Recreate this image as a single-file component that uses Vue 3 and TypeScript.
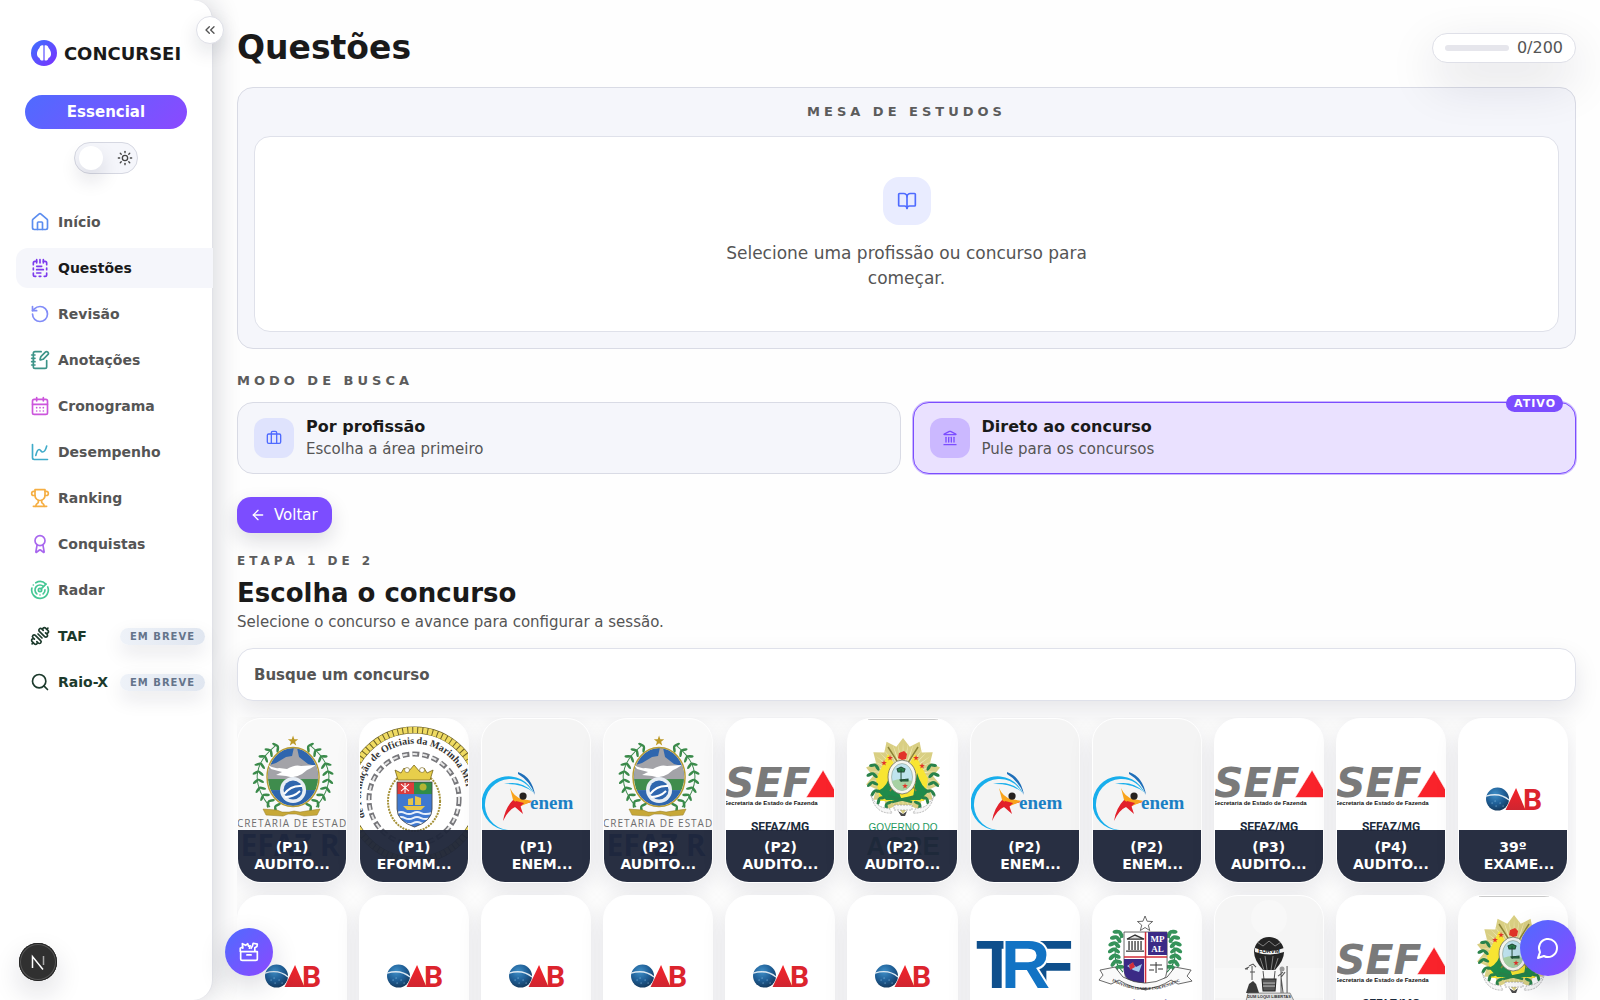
<script setup lang="ts">
import { computed, ref } from 'vue'

interface NavItem {
  label: string
  icon: string
  color: string
  soon?: boolean
}

interface Contest {
  logo: 'rj' | 'navy' | 'enem' | 'sefaz' | 'acre' | 'oab' | 'trf' | 'mpal' | 'balloon'
  title?: [string, string]
  indent?: boolean
}

interface Leaf {
  x: number
  y: number
  angle: number
}

const icons: Record<string, string[]> = {
  home: [
    'M15 21v-8a1 1 0 0 0-1-1h-4a1 1 0 0 0-1 1v8',
    'M3 10a2 2 0 0 1 .709-1.528l7-5.999a2 2 0 0 1 2.582 0l7 5.999A2 2 0 0 1 21 10v9a2 2 0 0 1-2 2H5a2 2 0 0 1-2-2z',
  ],
  notepad: [
    'M8 2v4', 'M12 2v4', 'M16 2v4', 'M16 4h2a2 2 0 0 1 2 2v2', 'M20 12v2',
    'M20 18v2a2 2 0 0 1-2 2h-1', 'M13 22h-2', 'M7 22H6a2 2 0 0 1-2-2v-2', 'M4 14v-2',
    'M4 8V6a2 2 0 0 1 2-2h2', 'M8 10h6', 'M8 14h8', 'M8 18h5',
  ],
  rotate: ['M3 12a9 9 0 1 0 9-9 9.75 9.75 0 0 0-6.74 2.74L3 8', 'M3 3v5h5'],
  notebook: [
    'M13.4 2H6a2 2 0 0 0-2 2v16a2 2 0 0 0 2 2h12a2 2 0 0 0 2-2v-7.4',
    'M2 6h4', 'M2 10h4', 'M2 14h4', 'M2 18h4',
    'M21.378 5.626a1 1 0 1 0-3.004-3.004l-5.01 5.012a2 2 0 0 0-.506.854l-.837 2.87a.5.5 0 0 0 .62.62l2.87-.837a2 2 0 0 0 .854-.506z',
  ],
  calendar: [
    'M8 2v4', 'M16 2v4',
    'M5 4h14a2 2 0 0 1 2 2v14a2 2 0 0 1-2 2H5a2 2 0 0 1-2-2V6a2 2 0 0 1 2-2z',
    'M3 10h18', 'M8 14h.01', 'M12 14h.01', 'M16 14h.01', 'M8 18h.01', 'M12 18h.01', 'M16 18h.01',
  ],
  chart: ['M3 3v16a2 2 0 0 0 2 2h16', 'M7 16c.5-2 1.5-7 4-7 2 0 2 3 4 3 2.5 0 4.5-5 5-7'],
  trophy: [
    'M6 9H4.5a2.5 2.5 0 0 1 0-5H6', 'M18 9h1.5a2.5 2.5 0 0 0 0-5H18', 'M4 22h16',
    'M10 14.66V17c0 .55-.47.98-.97 1.21C7.85 18.75 7 20.24 7 22',
    'M14 14.66V17c0 .55.47.98.97 1.21C16.15 18.75 17 20.24 17 22',
    'M18 2H6v7a6 6 0 0 0 12 0V2Z',
  ],
  award: [
    'm15.477 12.89 1.515 8.526a.5.5 0 0 1-.81.47l-3.58-2.687a1 1 0 0 0-1.197 0l-3.586 2.686a.5.5 0 0 1-.81-.469l1.514-8.526',
    'M18 8a6 6 0 1 1-12 0a6 6 0 1 1 12 0',
  ],
  radar: [
    'M19.07 4.93A10 10 0 0 0 6.99 3.34', 'M4 6h.01', 'M2.29 9.62A10 10 0 1 0 21.31 8.35',
    'M16.24 7.76A6 6 0 1 0 8.23 16.67', 'M12 18h.01', 'M17.99 11.66A6 6 0 0 1 15.77 16.67',
    'M14 12a2 2 0 1 1-4 0a2 2 0 1 1 4 0', 'm13.41 10.59 5.66-5.66',
  ],
  dumbbell: [
    'M14.4 14.4 9.6 9.6',
    'M18.657 2.515a2 2 0 1 0-2.829 2.828l-1.767-1.768a2 2 0 1 0-2.829 2.829l6.364 6.364a2 2 0 1 0 2.829-2.829l-1.768-1.767a2 2 0 1 0 2.828-2.829z',
    'm21.5 2.500-1.400 1.400', 'M3.900 20.100 2.500 21.500',
    'M6.404 11.232a2 2 0 1 0-2.829 2.829l1.768 1.767a2 2 0 1 0-2.828 2.829l2.828 2.828a2 2 0 1 0 2.829-2.828l1.767 1.768a2 2 0 1 0 2.829-2.829z',
  ],
  search: ['m21 21-4.34-4.34', 'M19 11a8 8 0 1 1-16 0a8 8 0 1 1 16 0'],
  collapse: ['m11 17-5-5 5-5', 'm18 17-5-5 5-5'],
  sun: [
    'M16 12a4 4 0 1 1-8 0a4 4 0 1 1 8 0', 'M12 2v2', 'M12 20v2', 'm4.93 4.93 1.41 1.41',
    'm17.66 17.66 1.41 1.41', 'M2 12h2', 'M20 12h2', 'm6.34 17.66-1.41 1.41', 'm19.07 4.93-1.41 1.41',
  ],
  book: [
    'M12 7v14',
    'M3 18a1 1 0 0 1-1-1V4a1 1 0 0 1 1-1h5a4 4 0 0 1 4 4 4 4 0 0 1 4-4h5a1 1 0 0 1 1 1v13a1 1 0 0 1-1 1h-6a3 3 0 0 0-3 3 3 3 0 0 0-3-3z',
  ],
  briefcase: [
    'M16 20V4a2 2 0 0 0-2-2h-4a2 2 0 0 0-2 2v16',
    'M4 6h16a2 2 0 0 1 2 2v10a2 2 0 0 1-2 2H4a2 2 0 0 1-2-2V8a2 2 0 0 1 2-2z',
  ],
  landmark: [
    'M10 18v-7', 'M14 18v-7', 'M18 18v-7', 'M6 18v-7', 'M3 22h18',
    'M11.12 2.198a2 2 0 0 1 1.76.006l7.866 3.847c.476.233.31.949-.22.949H3.474c-.53 0-.695-.716-.22-.949z',
  ],
  back: ['m12 19-7-7 7-7', 'M19 12H5'],
  chat: ['M7.9 20A9 9 0 1 0 4 16.1L2 22Z'],
  toolbox: [
    'M2 11.500h20v8.500a2 2 0 0 1-2 2H4a2 2 0 0 1-2-2z', 'M9.500 15.500h5',
    'M1.500 11V7.500l3-1.500', 'M4.500 7.500L4 2l4 2 2.500-2 1 3 2-.500-1 3',
    'M14.500 7.500l1.500-2.500 1-3.500 5 1-.500 3-2.500 1.500v4',
  ],
}

const navItems: NavItem[] = [
  { label: 'Início', icon: 'home', color: '#5b8def' },
  { label: 'Questões', icon: 'notepad', color: '#7c3aed' },
  { label: 'Revisão', icon: 'rotate', color: '#818cf8' },
  { label: 'Anotações', icon: 'notebook', color: '#3d9488' },
  { label: 'Cronograma', icon: 'calendar', color: '#cc55dc' },
  { label: 'Desempenho', icon: 'chart', color: '#3fabc9' },
  { label: 'Ranking', icon: 'trophy', color: '#f5ae42' },
  { label: 'Conquistas', icon: 'award', color: '#a866ee' },
  { label: 'Radar', icon: 'radar', color: '#45c795' },
  { label: 'TAF', icon: 'dumbbell', color: '#1c3a2c', soon: true },
  { label: 'Raio-X', icon: 'search', color: '#1c3a2c', soon: true },
]

const contests: Contest[] = [
  { logo: 'rj', title: ['(P1)', 'AUDITO...'] },
  { logo: 'navy', title: ['(P1)', 'EFOMM...'] },
  { logo: 'enem', title: ['(P1)', 'ENEM...'], indent: true },
  { logo: 'rj', title: ['(P2)', 'AUDITO...'] },
  { logo: 'sefaz', title: ['(P2)', 'AUDITO...'] },
  { logo: 'acre', title: ['(P2)', 'AUDITO...'] },
  { logo: 'enem', title: ['(P2)', 'ENEM...'], indent: true },
  { logo: 'enem', title: ['(P2)', 'ENEM...'], indent: true },
  { logo: 'sefaz', title: ['(P3)', 'AUDITO...'] },
  { logo: 'sefaz', title: ['(P4)', 'AUDITO...'] },
  { logo: 'oab', title: ['39º', 'EXAME...'], indent: true },
  { logo: 'oab' }, { logo: 'oab' }, { logo: 'oab' }, { logo: 'oab' }, { logo: 'oab' }, { logo: 'oab' },
  { logo: 'trf' }, { logo: 'mpal' }, { logo: 'balloon' }, { logo: 'sefaz' }, { logo: 'acre' },
]

/** Pairs of leaves along both sides of an elliptical wreath. */
function wreath(cx: number, cy: number, rx: number, ry: number, from: number, to: number, count: number): Leaf[] {
  const leaves: Leaf[] = []
  for (let i = 0; i < count; i++) {
    const deg = from + ((to - from) * i) / (count - 1)
    const rad = (deg * Math.PI) / 180
    for (const side of [-1, 1]) {
      for (const tilt of [-1, 1]) {
        const r = tilt * 2.5
        leaves.push({
          x: cx + side * (rx + r) * Math.cos(rad),
          y: cy + (ry + r) * Math.sin(rad),
          angle: side * (deg - 90 + tilt * 35),
        })
      }
    }
  }
  return leaves
}

/** Points of a star polygon with alternating radii. */
function star(cx: number, cy: number, outer: number, inner: number, tips: number): string {
  return Array.from({ length: tips * 2 }, (_, i) => {
    const r = i % 2 ? inner : outer
    const a = (Math.PI * i) / tips - Math.PI / 2
    return `${(cx + r * Math.cos(a)).toFixed(1)},${(cy + r * Math.sin(a)).toFixed(1)}`
  }).join(' ')
}

const rjLeaves = wreath(55, 58, 35, 34, -62, 62, 10)
const mpLeaves = wreath(52, 55, 31, 34, -32, 30, 7)
const acreLeaves = wreath(55, 60, 31, 30, -25, 60, 6)

const active = ref('Questões')
const mode = ref<'area' | 'contest'>('contest')
const query = ref('')
const answered = ref(0)
const progress = computed(() => `${(answered.value / 200) * 100}%`)
</script>

<template>
  <div class="app">
    <aside class="sidebar">
      <button class="collapse" type="button" aria-label="Recolher menu">
        <svg class="icon" viewBox="0 0 24 24"><path v-for="d in icons.collapse" :key="d" :d="d" /></svg>
      </button>

      <a class="brand" href="#">
        <svg class="brand-mark" viewBox="0 0 26 26">
          <defs>
            <linearGradient id="brandFill" x1="0" y1="0" x2="1" y2="1">
              <stop offset="0" stop-color="#3b72ff" />
              <stop offset="1" stop-color="#7c2fff" />
            </linearGradient>
          </defs>
          <circle cx="13" cy="13" r="13" fill="url(#brandFill)" />
          <path d="M12.400 5.500c-2-.800-3.600.600-4 2.500-1.500 1.500-2.700 4-2.400 6.500.200 2 1.200 3 2.500 3.500.600 2.400 2.500 3 3.900 2.200z" fill="#fff" />
          <path d="M13.600 5.500c2-.800 3.600.600 4 2.500 1.500 1.500 2.700 4 2.400 6.500-.200 2-1.200 3-2.500 3.500-.600 2.400-2.500 3-3.900 2.200z" fill="#fff" />
        </svg>
        <span>CONCURSEI</span>
      </a>

      <button class="plan" type="button">Essencial</button>
      <button class="theme" type="button" aria-label="Alternar tema">
        <span class="knob"></span>
        <svg class="icon" viewBox="0 0 24 24"><path v-for="d in icons.sun" :key="d" :d="d" /></svg>
      </button>

      <nav class="nav">
        <a
          v-for="item in navItems"
          :key="item.label"
          href="#"
          class="nav-item"
          :class="{ active: item.label === active, soon: item.soon }"
          @click.prevent="active = item.label"
        >
          <svg class="icon" viewBox="0 0 24 24" :style="{ color: item.color }">
            <path v-for="d in icons[item.icon]" :key="d" :d="d" />
          </svg>
          <span>{{ item.label }}</span>
          <span v-if="item.soon" class="soon-badge">EM BREVE</span>
        </a>
      </nav>
    </aside>

    <main class="content">
      <header class="top">
        <h1>Questões</h1>
        <div class="counter">
          <span class="track"><span class="fill" :style="{ width: progress }"></span></span>
          <span>{{ answered }}/200</span>
        </div>
      </header>

      <section class="desk">
        <h2 class="eyebrow">MESA DE ESTUDOS</h2>
        <div class="desk-empty">
          <span class="desk-icon">
            <svg class="icon" viewBox="0 0 24 24"><path v-for="d in icons.book" :key="d" :d="d" /></svg>
          </span>
          <p>Selecione uma profissão ou concurso para começar.</p>
        </div>
      </section>

      <section class="modes">
        <h2 class="eyebrow">MODO DE BUSCA</h2>
        <div class="mode-row">
          <button type="button" class="mode" :class="{ on: mode === 'area' }" @click="mode = 'area'">
            <span class="mode-icon">
              <svg class="icon" viewBox="0 0 24 24"><path v-for="d in icons.briefcase" :key="d" :d="d" /></svg>
            </span>
            <span class="mode-text"><strong>Por profissão</strong><span>Escolha a área primeiro</span></span>
            <span v-if="mode === 'area'" class="mode-badge">ATIVO</span>
          </button>
          <button type="button" class="mode" :class="{ on: mode === 'contest' }" @click="mode = 'contest'">
            <span class="mode-icon">
              <svg class="icon" viewBox="0 0 24 24"><path v-for="d in icons.landmark" :key="d" :d="d" /></svg>
            </span>
            <span class="mode-text"><strong>Direto ao concurso</strong><span>Pule para os concursos</span></span>
            <span v-if="mode === 'contest'" class="mode-badge">ATIVO</span>
          </button>
        </div>
      </section>

      <button class="back" type="button">
        <svg class="icon" viewBox="0 0 24 24"><path v-for="d in icons.back" :key="d" :d="d" /></svg>
        Voltar
      </button>

      <section class="step">
        <p class="eyebrow small">ETAPA 1 DE 2</p>
        <h2 class="step-title">Escolha o concurso</h2>
        <p class="step-sub">Selecione o concurso e avance para configurar a sessão.</p>
      </section>

      <input v-model="query" class="search" type="text" placeholder="Busque um concurso" aria-label="Busque um concurso" />

      <div class="grid">
        <button v-for="(contest, index) in contests" :key="index" type="button" class="tile">
          <svg class="art" viewBox="0 0 108 163" preserveAspectRatio="xMidYMid slice">
            <g v-if="contest.logo === 'rj'">
              <rect width="108" height="163" fill="#f9f9f9" />
              <path d="M37 27Q4 54 32 88M73 27Q106 54 78 88" fill="none" stroke="#3f8a50" />
              <ellipse
                v-for="(leaf, i) in rjLeaves" :key="i" rx="1.300" ry="3.600" fill="#3a8a4a"
                :transform="`translate(${leaf.x} ${leaf.y}) rotate(${leaf.angle})`"
              />
              <polygon :points="star(55, 22, 5.500, 2.200, 5)" fill="#bd9a28" />
              <clipPath :id="`rj${index}`"><ellipse cx="55" cy="58" rx="25" ry="29" /></clipPath>
              <g :clip-path="`url(#rj${index})`">
                <rect x="28" y="28" width="54" height="32" fill="#2f66ae" />
                <path d="M28 62V47l10-3 10-6 6-1 2-9 3 1 2 9 9 7 12 3v16z" fill="#a3a3a8" />
                <rect x="28" y="60" width="54" height="11" fill="#3f8c4d" />
                <rect x="28" y="71" width="54" height="18" fill="#2f66ae" />
              </g>
              <ellipse cx="55" cy="58" rx="26" ry="29.500" fill="none" stroke="#b79c35" stroke-width="1.500" />
              <path d="M30 46q6 4 11 3l8 1q8-5 14-3l15-1q-6 4-9 5l-5 4q-8 5-16 2l-10-1 6-3-11-3z" fill="#fff" />
              <circle cx="55" cy="71" r="13" fill="#e8eef5" />
              <circle cx="55" cy="71" r="9.500" fill="#2f66ae" />
              <path d="M46 75q7-9 18-8M47 78q9 0 15-6" fill="none" stroke="#fff" stroke-width="2" />
              <path d="M25 90l14 1 5 2h7l5-1 6 1 6-1 14-2-3 6-13 1-8-2h-8l-5 2-17-1z" fill="#c7a838" stroke="#947b22" stroke-width=".5" />
              <text x="54" y="108" class="rj-caption">CRETARIA DE ESTAD</text>
              <text x="52" y="137" class="rj-title">EFAZ R</text>
            </g>

            <g v-else-if="contest.logo === 'navy'">
              <rect width="108" height="163" fill="#fff" />
              <circle cx="54" cy="76" r="65" fill="none" stroke="#6e6228" stroke-width="7" />
              <circle cx="54" cy="76" r="65" fill="none" stroke="#efdb62" stroke-width="6" stroke-dasharray="4 1" />
              <path :id="`navy${index}`" d="M5 98a53 53 0 1 1 98 0" fill="none" />
              <text class="navy-text"><textPath :href="`#navy${index}`">de Formação de Oficiais da Marinha Mer</textPath></text>
              <circle cx="54" cy="80" r="45" fill="none" stroke="#77777b" stroke-width="5" stroke-dasharray="7 3" />
              <circle cx="54" cy="80" r="45" fill="none" stroke="#e6e6e6" stroke-width="2" stroke-dasharray="5 5" />
              <ellipse cx="54" cy="82" rx="26" ry="30" fill="none" stroke="#a59138" stroke-width="2" stroke-dasharray="2 1" />
              <path d="M38 61l-3-10 6 3 3-5 4 4 6-7 6 7 4-4 3 5 6-3-3 10z" fill="#e7ce4b" stroke="#756319" stroke-width=".8" />
              <circle cx="47" cy="51" r="2.500" fill="#fff" stroke="#756319" stroke-width=".6" />
              <circle cx="62" cy="51" r="2.500" fill="#fff" stroke="#756319" stroke-width=".6" />
              <clipPath :id="`shield${index}`"><path d="M37 63h35v27q0 12-17.500 18Q37 102 37 90z" /></clipPath>
              <g :clip-path="`url(#shield${index})`">
                <rect x="37" y="62" width="35" height="48" fill="#3f78d0" />
                <rect x="37" y="62" width="17" height="13" fill="#dc3b3b" />
                <rect x="54" y="62" width="18" height="13" fill="#2f8d48" />
                <path d="M41 65l8 7M49 65l-8 7M45 64v10" stroke="#fff" />
                <circle cx="63" cy="68" r="3.500" fill="#b3b532" />
                <path d="M43 87h22l-4 4H47zM48 86v-6l5-1v7zM55 86v-9l6 2v7z" fill="#e8c64a" />
                <path d="M37 94q4-2 8 0t8 0 8 0 11 0M37 99q4-2 8 0t8 0 8 0 11 0M37 104q4-2 8 0t8 0 8 0 11 0" stroke="#e8f0fb" stroke-width="2" fill="none" />
              </g>
              <path d="M37 63h35v27q0 12-17.500 18Q37 102 37 90z" fill="none" stroke="#444" stroke-width=".8" />
            </g>

            <g v-else-if="contest.logo === 'enem'">
              <rect width="108" height="163" fill="#f4f4f4" />
              <path d="M30 111A27 27 0 1 1 52 75Q43 59 27 60A24.500 24.500 0 1 0 30 111z" fill="#18aeec" />
              <path d="M22 65q17-4 29 8-12-9-29-8z" fill="#18aeec" />
              <path d="M36 53q14 5 17 23Q48 62 36 55z" fill="#1f6fb9" />
              <path d="M31 81q-8 8-10 21 5-11 12-14l8 7-3-9 12-3-10-2z" fill="#e2202b" />
              <path d="M28 69q4 9 12 11l11 2-12 5-8-6z" fill="#f9a31c" />
              <path d="M34 82l8 2-5 5-7-2z" fill="#e2202b" />
              <circle cx="41" cy="77" r="3.600" fill="#26211f" />
              <text x="48" y="90" class="enem-text">enem</text>
            </g>

            <g v-else-if="contest.logo === 'sefaz'">
              <rect width="108" height="163" fill="#fff" />
              <text x="-1" y="78" class="sef-text">SEF</text>
              <polygon points="97,51 113,78.500 80,78.500" fill="#f9232b" stroke="#fff" stroke-width=".6" />
              <text x="-2" y="86" class="sef-caption">Secretaria de Estado de Fazenda</text>
              <text x="54" y="112" class="sef-name">SEFAZ/MG</text>
            </g>

            <g v-else-if="contest.logo === 'acre'">
              <rect width="108" height="163" fill="#fff" />
              <path d="M20 .5h70" stroke="#c9c9c9" />
              <polygon :points="star(55, 57, 38, 30, 14)" fill="#d9cf83" />
              <polygon :points="star(55, 57, 34, 12, 40)" fill="#efe9b5" />
              <path d="M32 82L28 60l12-25 14 22 13-22 13 25-4 22z" fill="#f8e532" />
              <path d="M30 72q10-4 13-20l10 27 12-1 4-24q4 14 12 18l-9 9H38z" fill="#1f8b4b" />
              <path d="M40 28l28 44M70 28L42 72" stroke="#8c8436" stroke-width="1.500" />
              <ellipse
                v-for="(leaf, i) in acreLeaves" :key="i" rx="1.600" ry="3.600" fill="#28824a"
                :transform="`translate(${leaf.x} ${leaf.y}) rotate(${leaf.angle})`"
              />
              <polygon :points="star(36, 44, 3, 1.200, 5)" fill="#e23429" />
              <polygon :points="star(42, 39, 3, 1.200, 5)" fill="#e23429" />
              <polygon :points="star(68, 39, 3, 1.200, 5)" fill="#e23429" />
              <polygon :points="star(74, 47, 3, 1.200, 5)" fill="#e23429" />
              <ellipse cx="54" cy="58" rx="14" ry="17" fill="#f6f6ef" stroke="#6b6b5c" stroke-width=".8" />
              <ellipse cx="54" cy="58" rx="10.500" ry="13.500" fill="#bfe3ee" stroke="#7d8c7c" stroke-width=".5" />
              <path d="M44 62q10-4 20 0-2 9-10 9.500-8-.5-10-9.500z" fill="#a7d2a3" />
              <path d="M53 50v13M49 50l4-2 4 2-1 3h-6zM52 61l8-1v2h-7z" stroke="#234d37" fill="#28824a" />
              <polygon :points="star(57, 67, 3, 1.200, 5)" fill="#e23429" />
              <path d="M50 39l1-5 5-2 3 3-1 5-4 1z" fill="#e23429" />
              <path d="M40 77l24 6M68 77l-24 6" stroke="#28824a" stroke-width="2.500" />
              <path d="M23 76q6 14 18 13l3 5q-17 1-21-18zM86 76q-6 14-18 13l-3 5q17 1 21-18zM46 86h18v5H46z" fill="#f7f7f7" stroke="#8b8b8b" stroke-width=".6" stroke-dasharray="2 1" />
              <path d="M50 92l5 3 4-3-2 5h-4z" fill="#4b4b4b" />
              <text x="55" y="112" class="acre-gov">GOVERNO DO</text>
              <text x="55" y="136" class="acre-name">ACRE</text>
            </g>

            <g v-else-if="contest.logo === 'oab'">
              <rect width="108" height="163" fill="#fff" />
              <radialGradient :id="`globe${index}`" cx=".4" cy=".3" r=".8">
                <stop offset="0" stop-color="#3f8fc7" />
                <stop offset=".5" stop-color="#1f5f97" />
                <stop offset="1" stop-color="#12304f" />
              </radialGradient>
              <linearGradient :id="`red${index}`" x1="0" y1="0" x2="0" y2="1">
                <stop offset="0" stop-color="#f5232a" />
                <stop offset="1" stop-color="#cf2530" />
              </linearGradient>
              <circle cx="38.500" cy="80" r="11.500" :fill="`url(#globe${index})`" />
              <path d="M27 77q14-4 23 4" fill="none" stroke="#dbe8f2" stroke-width="1.300" />
              <path d="M33 84h.1M37 87h.1M41 84h.1M36 82h.1M44 87h.1" stroke="#9fd0f0" stroke-linecap="round" />
              <polygon points="57,69 66.500,91 46.500,91" :fill="`url(#red${index})`" />
              <text x="64" y="91" class="oab-text">B</text>
            </g>

            <g v-else-if="contest.logo === 'trf'">
              <rect width="108" height="163" fill="#fff" />
              <text x="5" y="92" class="trf-text dark">T</text>
              <text x="61" y="92" class="trf-text dark">F</text>
              <text x="30" y="92" class="trf-text bright">R</text>
            </g>

            <g v-else-if="contest.logo === 'mpal'">
              <rect width="108" height="163" fill="#fff" />
              <path d="M30 38Q14 60 30 76M74 38Q90 60 74 76" fill="none" stroke="#27804a" />
              <ellipse
                v-for="(leaf, i) in mpLeaves" :key="i" rx="2" ry="4" fill="#35935a"
                :transform="`translate(${leaf.x} ${leaf.y}) rotate(${leaf.angle})`"
              />
              <polygon :points="star(52, 28, 8, 3.500, 5)" fill="#fff" stroke="#444" stroke-width=".8" />
              <path d="M31 36h43v38q0 14-21.500 20Q31 88 31 74z" fill="#fff" stroke="#444" stroke-width=".8" />
              <path d="M55 36h19v23H55zM31 63h20v29q-20-6-20-18z" fill="#3b2a86" />
              <path d="M52.500 36v56M31 61h43" stroke="#d22f3a" stroke-width="1.500" />
              <path d="M34 43l8-4 9 4zM33 55h18M36 45v9M39 45v9M42 45v9M45 45v9M48 45v9" stroke="#333" stroke-width="1.300" fill="#ddd" />
              <text x="64.500" y="46" class="mp-text">MP</text>
              <text x="64.500" y="56" class="mp-text">AL</text>
              <path d="M34 70l5-3 4 4 6-3-3 8-6-2z" fill="#9fc6ec" />
              <path d="M36 69l4-3 2 5-5 3z" fill="#d22f3a" />
              <path d="M63 66v11M57 69h12M56 74h5M65 73h5" stroke="#333" fill="none" />
              <path d="M7 74l15-3 8 10q22 12 44 0l8-10 16 3-4 6 5 5-14 3-7-4q-26 17-52 0l-8 4-12-4 4-5z" fill="#fafafa" stroke="#444" stroke-width=".8" />
              <path :id="`mp${index}`" d="M19 85q33 18 68 0" fill="none" />
              <text class="mp-ribbon"><textPath :href="`#mp${index}`">INDIVISIBILIDADE E INDEPENDÊNCIA</textPath></text>
              <text x="54" y="111" class="mp-caption">MINISTÉRIO PÚBLICO</text>
            </g>

            <g v-else>
              <rect width="108" height="163" fill="#f5f5f5" />
              <path d="M0 72h108v30H0z" fill="#f8f8f8" />
              <circle cx="54" cy="22" r="18" fill="#f8f8f8" />
              <path d="M39 56a15 15 0 0 1 30 0q0 8-9 18H48q-9-10-9-18z" fill="#242424" />
              <path d="M45 62l4 12M50 60l2 14M58 60l-2 14M63 62l-4 12M42 46l6 4 6-5 6 5 6-4" stroke="#9b9b9b" fill="none" stroke-width=".8" />
              <path d="M40 52q14 6 29 0v4q-14 5-29 0z" fill="#f3f3f3" />
              <text x="54" y="57" class="balloon-text">FORVM</text>
              <path d="M48 75l1 9M60 75l-1 9" stroke="#555" />
              <path d="M47 83h14l-1 12H48z" fill="#555" stroke="#222" />
              <path d="M48 87h12M48 90h12" stroke="#ddd" stroke-width=".8" />
              <path d="M34 70l4-2 3 3M37 70v14M33 73h-3l4-2M35 76h5M66 74v23M72 70v27M70 76l-4 5 2 16M63 80l5-4" stroke="#555" fill="none" />
              <circle cx="67" cy="73" r="2.500" fill="#999" />
              <path d="M31 97l3-9 4-3 3 3 3 9z" fill="#3a3a3a" />
              <path d="M33 97h42l4 8H31z" fill="#e2e2e2" stroke="#666" stroke-width=".7" />
              <text x="54" y="102" class="balloon-caption">DUM LOQUI LIBERTAS</text>
            </g>
          </svg>
          <span v-if="contest.title" class="tile-label">
            <span>{{ contest.title[0] }}</span>
            <span :class="{ indent: contest.indent }">{{ contest.title[1] }}</span>
          </span>
        </button>
      </div>
    </main>

    <button class="fab tools" type="button" aria-label="Ferramentas">
      <svg class="icon" viewBox="0 0 24 24"><path v-for="d in icons.toolbox" :key="d" :d="d" /></svg>
    </button>
    <button class="fab chat" type="button" aria-label="Abrir conversa">
      <svg class="icon" viewBox="0 0 24 24"><path v-for="d in icons.chat" :key="d" :d="d" /></svg>
    </button>
    <button class="dev" type="button" aria-label="Ferramentas de desenvolvimento">
      <svg viewBox="0 0 38 38">
        <path d="M13.500 25V13.500L24 26.500" fill="none" stroke="#fff" stroke-width="1.500" />
        <path d="M24.500 13v9" fill="none" stroke="#aaa" stroke-width="1.500" />
      </svg>
    </button>
  </div>
</template>

<style>
body {
  margin: 0;
  background: #fefefe;
}
</style>

<style scoped>
.app {
  display: flex;
  height: 100vh;
  overflow: hidden;
  font-family: 'DejaVu Sans', Verdana, sans-serif;
  color: #1a1a1a;
}

.app *,
.app {
  box-sizing: border-box;
}

button {
  font-family: inherit;
  cursor: pointer;
}

h1,
h2,
p {
  margin: 0;
}

.icon {
  display: block;
  flex: none;
  width: 20px;
  height: 20px;
  fill: none;
  stroke: currentColor;
  stroke-width: 2;
  stroke-linecap: round;
  stroke-linejoin: round;
}

/* Sidebar */
.sidebar {
  position: relative;
  z-index: 2;
  display: flex;
  flex: none;
  flex-direction: column;
  align-items: center;
  width: 213px;
  padding: 39px 0 0;
  background: #fff;
  border-right: 1px solid #e1e2e8;
  border-radius: 0 20px 20px 0;
  box-shadow: 4px 0 24px rgba(20, 24, 50, 0.16);
}

.collapse {
  position: absolute;
  top: 16px;
  right: -12px;
  display: grid;
  place-items: center;
  width: 28px;
  height: 28px;
  padding: 0;
  color: #555;
  background: #fff;
  border: 1px solid #dfe0e8;
  border-radius: 50%;
  box-shadow: 0 8px 20px rgba(20, 24, 50, 0.12);
}

.collapse .icon {
  width: 16px;
  height: 16px;
}

.brand {
  display: flex;
  align-items: center;
  gap: 7px;
  height: 28px;
  font-size: 18px;
  font-weight: 700;
  color: #1a1a1a;
  text-decoration: none;
}

.brand-mark {
  width: 26px;
  height: 26px;
}

.plan {
  width: 162px;
  height: 34px;
  margin-top: 28px;
  font-size: 15px;
  font-weight: 700;
  color: #fff;
  background: linear-gradient(135deg, #4f6bff, #8b49ff);
  border: 0;
  border-radius: 17px;
}

.theme {
  display: flex;
  align-items: center;
  justify-content: space-between;
  width: 64px;
  height: 32px;
  margin-top: 13px;
  padding: 0 4px;
  color: #444;
  background: #f5f6fb;
  border: 1px solid #d6d8e2;
  border-radius: 16px;
}

.theme .icon {
  width: 16px;
  height: 16px;
}

.knob {
  width: 24px;
  height: 24px;
  background: #fff;
  border-radius: 50%;
  box-shadow: 0 10px 20px rgba(20, 24, 50, 0.14);
}

.nav {
  display: flex;
  flex-direction: column;
  gap: 6px;
  align-self: stretch;
  margin: 28px -1px 0 16px;
}

.nav-item {
  display: flex;
  align-items: center;
  gap: 8px;
  height: 40px;
  padding: 0 8px 0 14px;
  font-size: 14px;
  font-weight: 700;
  color: #555;
  text-decoration: none;
  border-radius: 12px 0 0 12px;
}

.nav-item.active {
  color: #1a1a1a;
  background: #f5f6fb;
}

.nav-item.soon {
  color: #1c3a2c;
}

.soon-badge {
  margin-left: auto;
  padding: 0 10px;
  font-size: 10px;
  line-height: 17px;
  letter-spacing: 1px;
  white-space: nowrap;
  color: #64748b;
  background: linear-gradient(90deg, #eef2f8, #e0e6f0);
  border-radius: 9px;
  box-shadow: 0 8px 20px rgba(20, 24, 50, 0.1);
}

/* Main column */
.content {
  display: flex;
  flex: 1;
  flex-direction: column;
  min-width: 0;
  padding: 24px 24px 0;
}

.top {
  display: flex;
  flex: none;
  align-items: center;
  justify-content: space-between;
  height: 47px;
  margin-bottom: 16px;
}

h1 {
  font-size: 33px;
  font-weight: 700;
  line-height: 40px;
}

.counter {
  position: relative;
  z-index: 1;
  display: flex;
  align-items: center;
  gap: 8px;
  height: 30px;
  padding: 0 12px;
  font-size: 16px;
  color: #555;
  background: #fff;
  border: 1px solid #dfe0e8;
  border-radius: 15px;
  box-shadow: 0 18px 50px rgba(20, 24, 50, 0.14);
}

.track {
  width: 64px;
  height: 6px;
  overflow: hidden;
  background: #e6e6ec;
  border-radius: 3px;
}

.fill {
  display: block;
  height: 100%;
  background: #7c4dff;
}

.eyebrow {
  font-size: 13px;
  font-weight: 700;
  line-height: 16px;
  letter-spacing: 4px;
  color: #5c5c5c;
}

.eyebrow.small {
  font-size: 12px;
}

.desk {
  display: flex;
  flex: none;
  flex-direction: column;
  gap: 16px;
  padding: 16px;
  text-align: center;
  background: #f5f6fb;
  border: 1px solid #d9dbe5;
  border-radius: 16px;
}

.desk-empty {
  display: flex;
  flex-direction: column;
  align-items: center;
  gap: 16px;
  padding: 40px;
  background: #fff;
  border: 1px solid #dfe1ea;
  border-radius: 16px;
}

.desk-icon {
  display: grid;
  place-items: center;
  width: 48px;
  height: 48px;
  color: #4f6bff;
  background: #e9ecff;
  border-radius: 16px;
}

.desk-empty p {
  max-width: 384px;
  font-size: 17px;
  line-height: 25px;
  color: #555;
}

.modes {
  flex: none;
  margin-top: 24px;
}

.mode-row {
  display: flex;
  gap: 12px;
  margin-top: 13px;
}

.mode {
  position: relative;
  display: flex;
  flex: 1;
  align-items: center;
  gap: 12px;
  padding: 14px 16px;
  text-align: left;
  color: #1a1a1a;
  background: #f5f6fb;
  border: 1px solid #d9dbe5;
  border-radius: 16px;
}

.mode.on {
  background: #eae1ff;
  border-color: #7c4dff;
  box-shadow: 0 0 0 1px rgba(124, 77, 255, 0.4);
}

.mode-icon {
  display: grid;
  place-items: center;
  width: 40px;
  height: 40px;
  color: #4f6bff;
  background: #dfe3fd;
  border-radius: 12px;
}

.mode.on .mode-icon {
  color: #7c4dff;
  background: #cbb8ff;
}

.mode-icon .icon {
  width: 16px;
  height: 16px;
}

.mode-text {
  display: flex;
  flex-direction: column;
  gap: 2px;
  font-size: 15px;
  line-height: 20px;
  color: #555;
}

.mode-text strong {
  font-size: 16px;
  color: #1a1a1a;
}

.mode-badge {
  position: absolute;
  top: -8px;
  right: 12px;
  padding: 0 7px 0 8px;
  font-size: 11px;
  font-weight: 700;
  line-height: 17px;
  letter-spacing: 1px;
  color: #fff;
  background: #7c4dff;
  border-radius: 9px;
}

.back {
  display: flex;
  flex: none;
  align-items: center;
  align-self: flex-start;
  gap: 8px;
  height: 36px;
  margin-top: 23px;
  padding: 0 14px 0 13px;
  font-size: 15px;
  color: #fff;
  background: #7c4dff;
  border: 0;
  border-radius: 14px;
  box-shadow: 0 8px 20px rgba(20, 24, 50, 0.14);
}

.back .icon {
  width: 16px;
  height: 16px;
}

.step {
  flex: none;
  margin-top: 20px;
}

.step-title {
  margin-top: 8px;
  font-size: 26px;
  line-height: 32px;
}

.step-sub {
  margin-top: 3px;
  font-size: 15px;
  line-height: 20px;
  color: #555;
}

.search {
  flex: none;
  width: 100%;
  height: 53px;
  margin-top: 16px;
  padding: 0 16px;
  font-family: inherit;
  font-size: 15px;
  font-weight: 700;
  color: #1a1a1a;
  background: #fff;
  border: 1px solid #dfe1ea;
  border-radius: 16px;
  outline: 0;
  box-shadow: 0 10px 24px rgba(20, 24, 50, 0.1);
}

.search::placeholder {
  color: #555;
  opacity: 1;
}

.grid {
  display: grid;
  flex: 1;
  grid-template-columns: repeat(11, 1fr);
  grid-auto-rows: max-content;
  gap: 12px;
  min-height: 0;
  margin-top: 16px;
  padding: 1px 8px 0 0;
  overflow: hidden;
}

.tile {
  position: relative;
  aspect-ratio: 2 / 3;
  min-width: 0;
  padding: 0;
  overflow: hidden;
  background: #fff;
  border: 1px solid #fff;
  border-radius: 24px;
  box-shadow: 0 8px 24px rgba(20, 24, 50, 0.1);
}

.art {
  display: block;
  width: 100%;
  height: 100%;
}

.tile-label {
  position: absolute;
  right: 0;
  bottom: 0;
  left: 0;
  display: flex;
  flex-direction: column;
  height: 52px;
  padding-top: 9px;
  font-size: 14px;
  font-weight: 700;
  line-height: 17px;
  text-align: center;
  color: #fff;
  background: rgba(31, 38, 58, 0.96);
}

.indent {
  padding-left: 12px;
}

/* Lettering inside the contest logos */
.rj-caption {
  font: 10px 'Open Sans', sans-serif;
  letter-spacing: 1px;
  text-anchor: middle;
  fill: #6e6e6e;
}

.rj-title {
  font: 700 30px 'Open Sans', sans-serif;
  text-anchor: middle;
  fill: #123a8c;
}

.navy-text {
  font: 700 10px 'Liberation Serif', serif;
  fill: #333;
}

.enem-text {
  font: 700 19px 'Liberation Serif', serif;
  fill: #1b80c4;
}

.sef-text {
  font: italic 700 41px 'DejaVu Sans', sans-serif;
  fill: #7a7a7a;
}

.sef-caption {
  font: 700 6px 'Liberation Sans', sans-serif;
  fill: #111;
}

.sef-name {
  font: 700 12px Roboto, sans-serif;
  text-anchor: middle;
  fill: #1b2b3b;
}

.acre-gov {
  font: 10px 'Liberation Sans', sans-serif;
  text-anchor: middle;
  fill: #1f9a5f;
}

.acre-name {
  font: 700 26px 'Liberation Sans', sans-serif;
  text-anchor: middle;
  fill: #0b6b3f;
}

.oab-text {
  font: 700 30px Roboto, sans-serif;
  fill: #dc242d;
}

.trf-text {
  font: 700 68px 'Liberation Sans', sans-serif;
}

.trf-text.dark {
  fill: #0e4f8c;
}

.trf-text.bright {
  fill: #1273c4;
  stroke: #fff;
  stroke-width: 4px;
  paint-order: stroke;
}

.mp-text {
  font: 700 9px 'Liberation Serif', serif;
  text-anchor: middle;
  fill: #fff;
}

.mp-ribbon {
  font: 700 4px 'Liberation Serif', serif;
  fill: #222;
}

.mp-caption {
  font: 700 9px 'Liberation Serif', serif;
  text-anchor: middle;
  fill: #3b2a86;
}

.balloon-text {
  font: 700 6px 'Liberation Sans', sans-serif;
  text-anchor: middle;
  fill: #222;
}

.balloon-caption {
  font: 700 4px 'Liberation Sans', sans-serif;
  text-anchor: middle;
  fill: #333;
}

/* Floating buttons */
.fab {
  position: fixed;
  z-index: 3;
  display: grid;
  place-items: center;
  padding: 0;
  color: #fff;
  background: linear-gradient(135deg, #4f6bff, #8b49ff);
  border: 0;
  border-radius: 50%;
  box-shadow: 0 10px 28px rgba(20, 24, 50, 0.16);
}

.fab.tools {
  bottom: 24px;
  left: 225px;
  width: 48px;
  height: 48px;
}

.fab.tools .icon {
  width: 20px;
  height: 20px;
}

.fab.chat {
  right: 24px;
  bottom: 24px;
  width: 56px;
  height: 56px;
}

.fab.chat .icon {
  width: 24px;
  height: 24px;
}

.dev {
  position: fixed;
  bottom: 19px;
  left: 19px;
  z-index: 3;
  width: 38px;
  height: 38px;
  padding: 0;
  background: #303030;
  border: 0;
  border-radius: 50%;
  box-shadow: inset 0 0 0 1px #222, inset 0 0 0 2px #555, 0 12px 28px rgba(20, 24, 50, 0.14);
}

.dev svg {
  display: block;
  width: 38px;
  height: 38px;
}
</style>
